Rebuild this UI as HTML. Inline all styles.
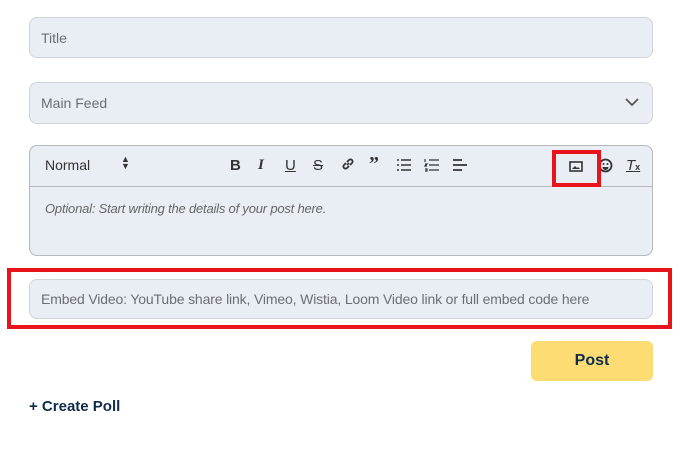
<!DOCTYPE html>
<html><head><style>
body{margin:0;width:678px;height:449px;background:#fff;font-family:"Liberation Sans",sans-serif;position:relative;overflow:hidden}
.in{position:absolute;left:29px;width:624px;background:#e9eef5;border:1px solid #cfd4da;border-radius:8px;box-sizing:border-box;color:#6b6f74;font-size:14px;padding-left:11px;display:flex;align-items:center}
.red{position:absolute;border:4px solid #e8141c;box-sizing:border-box}
.tb{position:absolute;top:157px;font-size:15px;color:#333;font-weight:bold}
</style></head><body>
<div class="in" style="top:17px;height:41px">Title</div>
<div class="in" style="top:82px;height:42px">Main Feed
<svg style="position:absolute;right:13px;top:15px" width="14" height="9" viewBox="0 0 14 9"><path d="M1 1l6 6 6-6" fill="none" stroke="#555" stroke-width="1.8"/></svg></div>
<div style="position:absolute;left:29px;top:145px;width:624px;height:111px;background:#e9eef5;border:1px solid #b5b8bc;border-radius:8px;box-sizing:border-box">
<div style="position:absolute;left:0;right:0;top:40px;border-top:1px solid #b5b8bc"></div>
<div style="position:absolute;left:15px;top:11px;font-size:14px;color:#333">Normal</div>
<div style="position:absolute;left:91px;top:10px;font-size:9px;line-height:7px;color:#333">▲<br>▼</div>
<div style="position:absolute;left:15px;top:55px;font-size:13px;color:#666;font-style:italic;letter-spacing:-0.2px">Optional: Start writing the details of your post here.</div>
</div>
<div class="tb" style="left:230px">B</div>
<div class="tb" style="left:258px;font-family:'Liberation Serif';font-style:italic">I</div>
<div class="tb" style="left:285px;text-decoration:underline;font-weight:normal">U</div>
<div class="tb" style="left:313px;text-decoration:line-through;font-weight:normal">S</div>
<svg style="position:absolute;left:341px;top:157px" width="14" height="14" viewBox="0 0 14 14"><path d="M6 8l2-2M5 6L3 8a2 2 0 003 3l2-2M9 8l2-2a2 2 0 00-3-3L6 5" stroke="#333" stroke-width="1.8" fill="none"/></svg>
<div class="tb" style="left:369px;top:153px;font-size:20px;font-family:'Liberation Serif'">”</div>
<svg style="position:absolute;left:396px;top:158px" width="16" height="14"><path d="M1 2h2M1 7h2M1 12h2M5 2h10M5 7h10M5 12h10" stroke="#333" stroke-width="1.6"/></svg>
<svg style="position:absolute;left:424px;top:158px" width="16" height="14"><path d="M1 1v3M1 6h2l-2 2h2M1 11h2v2H1M5 2h10M5 7h10M5 12h10" stroke="#333" stroke-width="1.2" fill="none"/></svg>
<svg style="position:absolute;left:452px;top:158px" width="16" height="14"><path d="M1 2h9M1 7h14M1 12h9" stroke="#333" stroke-width="1.8"/></svg>
<svg style="position:absolute;left:569px;top:161px" width="14" height="11"><rect x="1" y="1" width="12" height="9" fill="none" stroke="#333" stroke-width="1.6"/><path d="M3 8l3-3 2 2 1-1 2 2z" fill="#333"/></svg>
<svg style="position:absolute;left:598px;top:158px" width="15" height="15"><circle cx="7.5" cy="7.5" r="6" fill="none" stroke="#333" stroke-width="1.8"/><circle cx="5.5" cy="6" r="1" fill="#333"/><circle cx="9.5" cy="6" r="1" fill="#333"/><path d="M4.5 9h6a3 3 0 01-6 0z" fill="#333"/></svg>
<div class="tb" style="left:626px;font-style:italic;text-decoration:underline;font-weight:normal">T<span style="font-size:9px;font-weight:bold;font-style:normal;text-decoration:none">x</span></div>
<div class="red" style="left:552px;top:150px;width:49px;height:37px"></div>
<div class="red" style="left:7px;top:268px;width:665px;height:61px"></div>
<div class="in" style="top:279px;height:40px;letter-spacing:-0.15px">Embed Video: YouTube share link, Vimeo, Wistia, Loom Video link or full embed code here</div>
<div style="position:absolute;left:531px;top:341px;width:122px;height:40px;background:#fddc73;border-radius:6px;color:#0f2c4c;font-weight:bold;font-size:16px;display:flex;align-items:center;justify-content:center">Post</div>
<div style="position:absolute;left:29px;top:398px;color:#0f2c4c;font-weight:bold;font-size:15px">+ Create Poll</div>
</body></html>
